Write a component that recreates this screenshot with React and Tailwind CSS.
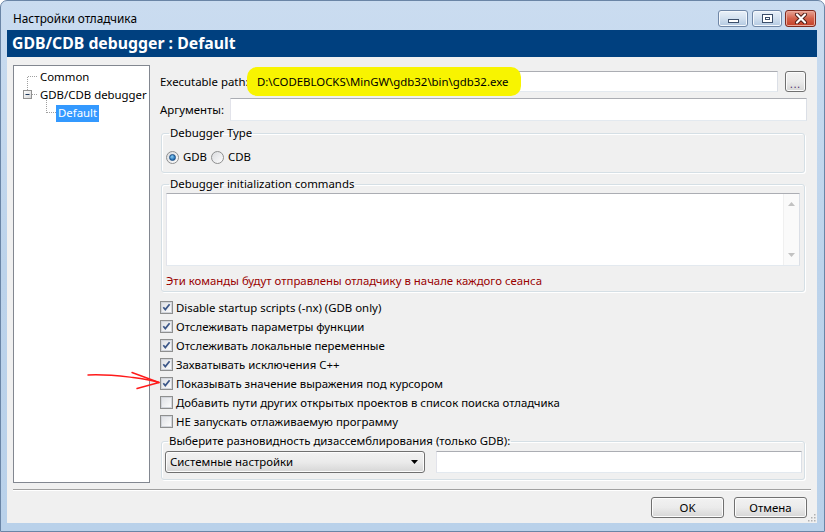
import React from "react";

function CheckBox({ checked }) {
  return (
    <span className="w-[13px] h-[13px] shrink-0 border border-[#8e8f8f] bg-white flex items-center justify-center">
      <span className="relative w-[11px] h-[11px] border border-[#d2d5db] bg-gradient-to-br from-[#e0e2e6] to-[#fbfbfb]">
        {checked && (
          <svg width="11" height="11" viewBox="0 0 11 11" className="absolute -left-[1px] -top-[1px]">
            <path d="M2.3 5.3 L4.3 7.6 L8.6 2.2" fill="none" stroke="#3b5688" strokeWidth="1.7" />
          </svg>
        )}
      </span>
    </span>
  );
}

function Radio({ checked }) {
  return (
    <span className="w-[13px] h-[13px] shrink-0 rounded-full border border-[#8e8f8f] bg-gradient-to-br from-[#dadcdf] to-[#fdfdfd] flex items-center justify-center">
      {checked && (
        <span className="w-[7px] h-[7px] rounded-full bg-[radial-gradient(circle_at_40%_35%,#8fd0f5,#1f6db3_70%)] border border-[#1c4f86]" />
      )}
    </span>
  );
}

function WinButton({ children, className = "" }) {
  return (
    <div
      className={
        "h-[21px] rounded-[3px] border border-[#707070] bg-gradient-to-b from-[#f2f2f2] via-[#ebebeb] to-[#d6d6d6] shadow-[inset_0_0_0_1px_#fcfcfc] flex items-center justify-center " +
        className
      }
    >
      {children}
    </div>
  );
}

function Group({ label, children, className = "" }) {
  return (
    <fieldset
      className={
        "border border-[#d5dfe5] rounded-[3px] shadow-[inset_1px_1px_0_#ffffff,1px_1px_0_#ffffff] " +
        className
      }
    >
      <legend className="ml-[3px] px-[1px] leading-[16px] h-[16px]">{label}</legend>
      {children}
    </fieldset>
  );
}

const inputBorder =
  "border border-t-[#abadb3] border-l-[#e2e3ea] border-r-[#dbdfe6] border-b-[#e3e9ef] bg-white";

export default function App() {
  const checks = [
    ["Disable startup scripts (-nx) (GDB only)", true],
    ["Отслеживать параметры функции", true],
    ["Отслеживать локальные переменные", true],
    ["Захватывать исключения C++", true],
    ["Показывать значение выражения под курсором", true],
    ["Добавить пути других открытых проектов в список поиска отладчика", false],
    ["НЕ запускать отлаживаемую программу", false],
  ];

  return (
    <div className="relative w-[825px] h-[532px] overflow-hidden rounded-t-[7px] border border-[#6a85a6] bg-gradient-to-b from-[#cadcf0] via-[#bcd3eb] to-[#b9d1ea] flex flex-col font-['Noto_Sans',sans-serif] text-[11.4px] text-black">
      {/* Title bar */}
      <div className="h-[29px] shrink-0 flex items-start justify-between">
        <div className="pl-[12px] pt-[9px] text-[11.8px] leading-[16px] text-[#000]">Настройки отладчика</div>
        <div className="flex pt-[9px] pr-[8px]">
          <div className="w-[30px] h-[17px] rounded-[3px] border border-[#6f86a6] bg-gradient-to-b from-[#eaf1f9] via-[#d2e0ef] to-[#b2c8e1] shadow-[inset_0_0_0_1px_#f4f8fc] flex items-end justify-center pb-[3px]">
            <span className="w-[11px] h-[4px] bg-white border border-[#3b4e6a]" />
          </div>
          <div className="ml-[4px] w-[30px] h-[17px] rounded-[3px] border border-[#6f86a6] bg-gradient-to-b from-[#eaf1f9] via-[#d2e0ef] to-[#b2c8e1] shadow-[inset_0_0_0_1px_#f4f8fc] flex items-center justify-center">
            <span className="w-[11px] h-[9px] bg-white border border-[#3b4e6a] flex items-center justify-center">
              <span className="w-[5px] h-[3px] border border-[#3b4e6a]" />
            </span>
          </div>
          <div className="ml-[3px] w-[31px] h-[17px] rounded-[3px] border border-[#7e2a1e] bg-gradient-to-b from-[#e6a395] via-[#d4614a] to-[#c23f27] shadow-[inset_0_0_0_1px_#eba99b] flex items-center justify-center">
            <svg width="14" height="11" viewBox="0 0 14 11">
              <path d="M3 1.5 L11 9.5 M11 1.5 L3 9.5" stroke="#4a1a14" strokeWidth="4" strokeLinecap="round" />
              <path d="M3 1.5 L11 9.5 M11 1.5 L3 9.5" stroke="#ffffff" strokeWidth="2.2" strokeLinecap="round" />
            </svg>
          </div>
        </div>
      </div>

      {/* Client area */}
      <div className="ml-[6px] mr-[7px] mb-[8px] flex-1 bg-[#f0f0f0] flex flex-col">
        <div className="h-[27px] shrink-0 bg-[#00407f] text-white font-bold text-[15.8px] pl-[5px] flex items-center leading-none">
          GDB/CDB debugger : Default
        </div>

        <div className="h-[432px] shrink-0 flex px-[6px] pt-[8px]">
          {/* Tree */}
          <div className="relative w-[137px] h-[418px] border border-[#828790] bg-white pt-[2px]">
            <svg className="absolute left-0 top-0" width="50" height="60" viewBox="0 0 50 60">
              <g stroke="#a0a0a0" strokeDasharray="1 1" fill="none">
                <path d="M13.5 11 L13.5 24" />
                <path d="M14 10.5 L24 10.5" />
                <path d="M18 28.5 L24 28.5" />
                <path d="M32.5 34 L32.5 47" />
                <path d="M33 46.5 L42 46.5" />
              </g>
              <rect x="9.5" y="24.5" width="8" height="8" fill="url(#mb)" stroke="#919191" />
              <defs>
                <linearGradient id="mb" x1="0" y1="0" x2="1" y2="1">
                  <stop offset="0" stopColor="#ffffff" />
                  <stop offset="1" stopColor="#d6d6d6" />
                </linearGradient>
              </defs>
              <path d="M11.5 28.5 L15.5 28.5" stroke="#1e395b" />
            </svg>
            <div className="h-[18px] pl-[26px] flex items-center">Common</div>
            <div className="h-[18px] pl-[26px] flex items-center">GDB/CDB debugger</div>
            <div className="h-[18px] pl-[42px] flex items-center">
              <span className="bg-[#3399ff] text-white h-[17px] px-[2px] flex items-center">Default</span>
            </div>
          </div>

          {/* Right column */}
          <div className="ml-[10px] w-[647px] flex flex-col">
            <div className="mt-[6px] h-[21px] flex items-center">
              <span className="w-[90px] shrink-0">Executable path:</span>
              <div className={"relative flex-1 h-[21px] " + inputBorder}>
                <span className="absolute -left-[4px] -top-[5px] -bottom-[5px] w-[274px] rounded-[10px] bg-[#f8f400] blur-[0.6px]" />
                <span className="relative pl-[6px] leading-[19px] whitespace-nowrap">
                  {"D:\\CODEBLOCKS\\MinGW\\gdb32\\bin\\gdb32.exe"}
                </span>
              </div>
              <WinButton className="ml-[7px] mr-[1px] w-[21px]">
                <span className="text-[10px] leading-none mt-[5px] tracking-[1px] text-[#4a2a6a]">...</span>
              </WinButton>
            </div>

            <div className="mt-[6px] h-[23px] flex items-center">
              <span className="w-[70px] shrink-0">Аргументы:</span>
              <div className={"flex-1 h-[23px] " + inputBorder} />
            </div>

            <Group label="Debugger Type" className="mt-[4px] ml-[1px] mr-[2px] px-[4px] pt-[8px] pb-[7px]">
              <div className="h-[16px] flex items-center">
                <Radio checked />
                <span className="ml-[4px]">GDB</span>
                <span className="ml-[4px]"><Radio /></span>
                <span className="ml-[4px]">CDB</span>
              </div>
            </Group>

            <Group label="Debugger initialization commands" className="mt-[3px] ml-[1px] mr-[2px] px-[4px] pt-[1px] pb-[2px]">
              <div className={"h-[73px] flex justify-end " + inputBorder}>
                <div className="w-[16px] h-full bg-[#fafafa] border-l border-[#f0f0f0] flex flex-col items-center justify-between py-[8px]">
                  <svg width="7" height="4" viewBox="0 0 7 4"><path d="M0 4 L3.5 0 L7 4 Z" fill="#c2c2c2" /></svg>
                  <svg width="7" height="4" viewBox="0 0 7 4"><path d="M0 0 L3.5 4 L7 0 Z" fill="#c2c2c2" /></svg>
                </div>
              </div>
              <div className="mt-[7px] h-[16px] leading-[16px] text-[#990000]">
                Эти команды будут отправлены отладчику в начале каждого сеанса
              </div>
            </Group>

            <div className="mt-[6px] flex flex-col">
              {checks.map(([t, c]) => (
                <div key={t} className="h-[19px] flex items-center">
                  <CheckBox checked={c} />
                  <span className="ml-[3px] whitespace-nowrap">{t}</span>
                </div>
              ))}
            </div>

            <Group
              label="Выберите разновидность дизассемблирования (только GDB):"
              className="mt-[2px] ml-[1px] mr-[2px] pl-[3px] pr-[2px] pt-[2px] pb-[6px]"
            >
              <div className="flex h-[22px]">
                <div className="w-[260px] h-[22px] rounded-[3px] border border-[#707070] bg-gradient-to-b from-[#f2f2f2] via-[#ebebeb] to-[#d6d6d6] shadow-[inset_0_0_0_1px_#fcfcfc] flex items-center justify-between pl-[4px] pr-[6px]">
                  <span>Системные настройки</span>
                  <svg width="7" height="4" viewBox="0 0 7 4"><path d="M0 0 L3.5 4 L7 0 Z" fill="#000" /></svg>
                </div>
                <div className={"ml-[11px] flex-1 h-[22px] " + inputBorder} />
              </div>
            </Group>
          </div>
        </div>

        <div className="mx-[6px] h-[1px] bg-[#a0a0a0] shadow-[0_1px_0_#ffffff]" />

        <div className="relative flex-1 flex justify-end items-start pt-[7px] pr-[10px]">
          <WinButton className="w-[73px]">OK</WinButton>
          <WinButton className="ml-[10px] w-[73px]">Отмена</WinButton>
          <svg className="absolute right-[1px] bottom-[1px]" width="10" height="10" viewBox="0 0 10 10">
            {[[8, 2], [8, 5], [8, 8], [5, 5], [5, 8], [2, 8]].map(([x, y]) => (
              <rect key={x + "-" + y} x={x} y={y} width="1.5" height="1.5" fill="#b0b0b0" />
            ))}
          </svg>
        </div>
      </div>

      {/* Red hand-drawn arrow annotation */}
      <svg className="absolute left-[84px] top-[367px] pointer-events-none" width="80" height="26" viewBox="0 0 80 26">
        <path d="M3 7 C 20 6, 35 8, 48 9.5 S 66 12, 74 14.5" fill="none" stroke="#ff1a1a" strokeWidth="1.4" strokeLinecap="round" />
        <path d="M47 4.5 L74 14.5 L52 20.5" fill="none" stroke="#ff1a1a" strokeWidth="1.4" strokeLinecap="round" strokeLinejoin="round" />
      </svg>
    </div>
  );
}
